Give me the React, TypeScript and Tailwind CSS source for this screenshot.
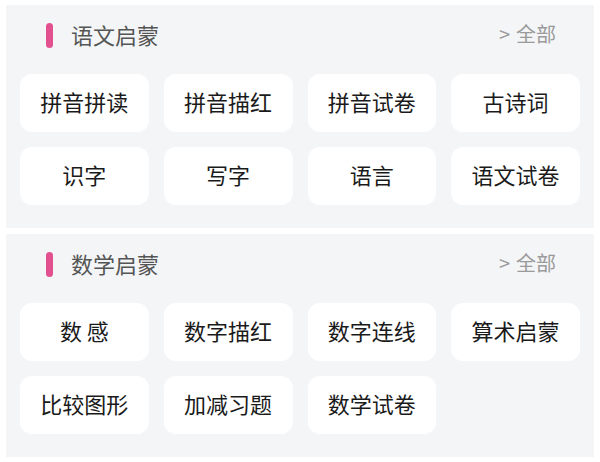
const sections = [
  {
    title: '语文启蒙',
    items: ['拼音拼读', '拼音描红', '拼音试卷', '古诗词', '识字', '写字', '语言', '语文试卷'],
  },
  {
    title: '数学启蒙',
    items: ['数 感', '数字描红', '数字连线', '算术启蒙', '比较图形', '加减习题', '数学试卷'],
  },
]

function Section({ title, items }: { title: string; items: string[] }) {
  return (
    <div className="bg-[#f4f5f7] px-[14px] pt-[18px] pb-[23px]">
      <div className="flex items-center h-[25px] pr-[24px]">
        <div className="ml-[26px] w-[7px] h-[25px] rounded-full bg-[#e2508f]" />
        <div className="ml-[18px] pb-[3px] text-[22px] leading-none text-[#555555]">{title}</div>
        <div className="ml-auto pb-[3px] text-[20px] leading-none text-[#9a9a9a]">
          <span className="mr-[6px]">&gt;</span>全部
        </div>
      </div>
      <div className="mt-[26px] grid grid-cols-4 gap-[15px]">
        {items.map((t) => (
          <div
            key={t}
            className="h-[58px] pb-[3px] rounded-[12px] bg-white flex items-center justify-center text-[22px] text-[#1a1a1a] whitespace-pre"
          >
            {t}
          </div>
        ))}
      </div>
    </div>
  )
}

export default function App() {
  return (
    <div
      className="w-[600px] h-[462px] bg-white pt-[5px] px-[6px] flex flex-col gap-[6px]"
      style={{ fontFamily: '"Noto Sans CJK SC", "Noto Sans", sans-serif' }}
    >
      {sections.map((s) => (
        <Section key={s.title} title={s.title} items={s.items} />
      ))}
    </div>
  )
}
